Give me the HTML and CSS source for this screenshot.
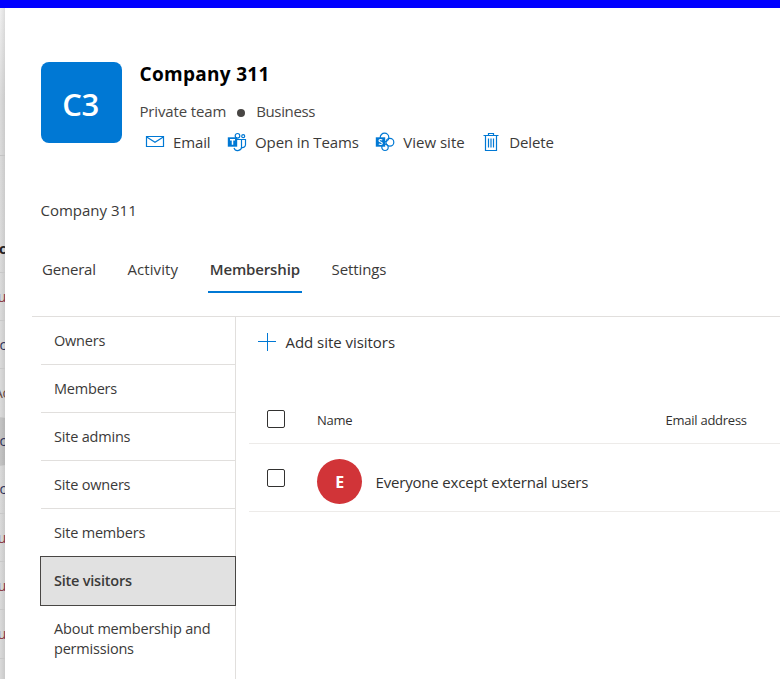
FILE: index.html
```html
<!DOCTYPE html>
<html lang="en">
<head>
<meta charset="utf-8">
<title>Company 311</title>
<link rel="stylesheet" href="styles.css">
</head>
<body>
<div class="topbar"></div>
<div class="shell">
  <div class="backdrop">
    <div class="behind-head"></div>
    <div class="behind-row tall"><b>nc</b></div>
    <div class="behind-row red"><span>u</span></div>
    <div class="behind-row"><span>c</span></div>
    <div class="behind-row mixed"><span>Ac</span></div>
    <div class="behind-row active"><span>c</span></div>
    <div class="behind-row"><span>c</span></div>
    <div class="behind-row red"><span>u</span></div>
    <div class="behind-row red"><span>u</span></div>
    <div class="behind-row red"><span>u</span></div>
  </div>
  <main class="panel">
    <header class="header">
      <div class="logo">C3</div>
      <div class="info">
        <h1><span class="t">Company 311</span></h1>
        <div class="meta"><span class="t private">Private team</span><i class="dot"></i><span class="t business">Business</span></div>
        <div class="actions">
          <button class="action email">
            <svg width="20" height="20" viewBox="0 0 20 20"><path d="M1.5 4.5h17v10h-17zM1.700 5l8.300 5.200L18.300 5"/></svg>
            <span class="t">Email</span></button>
          <button class="action teams">
            <svg width="20" height="20" viewBox="0 0 20 20"><circle cx="10.500" cy="3.800" r="2.300"/><circle cx="16.200" cy="4.200" r="1.500"/><path d="M10 7.500h4.500v6.500a3.900 3.900 0 0 1-7.500 2M14.500 7.500h4v5a3 3 0 0 1-4 3"/><path class="fill" d="M.8 5.300h9.400v9.400H.8z"/><path class="letter" d="M3 7.800h5M5.500 7.800v5"/></svg>
            <span class="t">Open in Teams</span></button>
          <button class="action site">
            <svg width="20" height="20" viewBox="0 0 20 20"><circle cx="9.500" cy="5.500" r="4.300"/><circle cx="14.900" cy="10.300" r="3.900"/><circle cx="10" cy="15.300" r="3.200"/><path class="fill" d="M.8 5.300h9.400v9.400H.8z"/><path class="letter thin" d="M7.300 8.200C6.200 7.200 4 7.400 4 8.700c0 1.500 3.300 1 3.300 2.600 0 1.500-2.400 1.500-3.500.6"/></svg>
            <span class="t">View site</span></button>
          <button class="action delete">
            <svg width="20" height="20" viewBox="0 0 20 20"><path d="M2.500 3.500h15M7.500 3.500v-2h5v2M4.500 3.500v15h11v-15M7.500 6.500v9M10 6.500v9M12.500 6.500v9"/></svg>
            <span class="t">Delete</span></button>
        </div>
      </div>
    </header>
    <p class="description"><span class="t">Company 311</span></p>
    <nav class="tabs">
      <a class="tab general"><span class="t">General</span></a>
      <a class="tab activity"><span class="t">Activity</span></a>
      <a class="tab selected"><span class="t">Membership</span></a>
      <a class="tab"><span class="t">Settings</span></a>
    </nav>
    <section class="content">
      <ul class="side">
        <li><span class="t">Owners</span></li>
        <li><span class="t">Members</span></li>
        <li><span class="t">Site admins</span></li>
        <li><span class="t">Site owners</span></li>
        <li class="sitemembers"><span class="t">Site members</span></li>
        <li class="current"><span class="t">Site visitors</span></li>
        <li class="about"><span class="t">About membership and</span><br><span class="t">permissions</span></li>
      </ul>
      <div class="main">
        <button class="add"><svg width="18" height="18" viewBox="0 0 18 18"><path d="M9.500 0v18M0 8.500h18"/></svg><span class="t">Add site visitors</span></button>
        <div class="row head"><i class="check"></i><span class="name"><span class="t">Name</span></span><span class="mail"><span class="t">Email address</span></span></div>
        <div class="row user"><i class="check"></i><span class="avatar">E</span><span class="t">Everyone except external users</span></div>
      </div>
    </section>
  </main>
</div>
</body>
</html>
```
FILE: styles.css
```css
* { box-sizing: border-box; }
body { margin: 0; width: 780px; height: 679px; overflow: hidden; background: #fff; color: #3b3a39; font: 15px/20px "Open Sans", "Noto Sans", sans-serif; letter-spacing: -0.3px; }
button { display: flex; align-items: center; padding: 0; border: 0; background: none; color: inherit; font: inherit; letter-spacing: inherit; }
.t { white-space: nowrap; }
.topbar { height: 8px; background: #00f; }
.shell { display: flex; height: 671px; }
.backdrop { width: 5px; flex: none; overflow: hidden; background: linear-gradient(90deg, rgba(0,0,0,0), rgba(0,0,0,.08)), linear-gradient(#f0f0f0, #dcdcdc 90px, #dadada); color: #2c3158; font-size: 14px; }
.behind-head { height: 148px; border-bottom: 1px solid #c4c4c4; }
.behind-row { display: flex; justify-content: flex-end; align-items: center; height: 48.2px; border-bottom: 1px solid #c8c8c8; }
.behind-row > * { margin-right: -1px; }
.behind-row.tall { height: 117px; padding-top: 70px; color: #222; }
.behind-row.red { color: #863743; }
.behind-row.mixed { color: #674b42; }
.behind-row.mixed > * { margin-right: -4px; }
.behind-row.active { background: rgba(0,0,0,.1); }
.panel { flex: 1; min-width: 0; background: #fff; }
.header { display: flex; gap: 17.5px; height: 187px; padding: 54px 0 0 36px; }
.logo { display: flex; align-items: center; justify-content: center; width: 81px; height: 81px; border-radius: 8px; background: #0078d4; color: #fff; font-size: 31px; font-weight: 600; letter-spacing: -0.5px; padding: 2px 2px 0 0; }
h1 { margin: 0; height: 26px; color: #000; font-size: 19px; line-height: 25px; font-weight: 700; letter-spacing: .3px; }
.meta { display: flex; align-items: center; height: 20px; margin-top: 13px; color: #484644; letter-spacing: -.15px; }
.business { letter-spacing: -.35px; }
.dot { width: 8px; height: 8px; margin: 3px 11px 0 11px; border-radius: 50%; background: #484644; }
.actions { display: flex; margin: 11px 0 0 5.5px; letter-spacing: -.12px; }
.action svg { margin-right: 8px; fill: none; stroke: #0078d4; stroke-width: 1.2; }
.action .fill { fill: #0078d4; stroke: none; }
.action .letter { stroke: #fff; stroke-width: 1.5; }
.action .thin { stroke-width: 1.1; }
.action { margin-right: 16.5px; }
.site { letter-spacing: 0; }
.description { margin: 0; padding: 5px 0 0 35.5px; height: 55px; letter-spacing: 0; }
.tabs { display: flex; gap: 27.7px; height: 66px; padding-left: 35px; letter-spacing: -.1px; }
.tab { height: 43px; padding: 9px 2px 0; }
.general { letter-spacing: -.2px; }
.activity { letter-spacing: .08px; }
.selected { border-bottom: 2px solid #0078d4; font-weight: 600; letter-spacing: -.15px; }
.content { display: flex; height: 363px; margin-left: 27px; border-top: 1px solid #e1dfdd; }
.side { width: 204px; flex: none; margin: 0; padding: 0 0 0 9px; border-right: 1px solid #e1dfdd; list-style: none; font-size: 14.5px; letter-spacing: -.2px; }
.side li { height: 48px; padding: 14px 13px 0; border-bottom: 1px solid #e1dfdd; }
.side .sitemembers, .side .about { border-bottom: 0; }
.side li.current { height: 50px; margin: -1px -1px 0; padding: 14px 13px 0; background: #e1e1e1; border: 1px solid #484644; font-weight: 600; letter-spacing: -.22px; }
.side .about { height: 70px; padding-top: 13px; }
.main { flex: 1; min-width: 0; padding-left: 13px; color: #323130; }
.add { height: 20px; margin: 15px 0 0 9px; letter-spacing: -.04px; }
.add svg { margin-right: 9.5px; stroke: #0078d4; stroke-width: 1; }
.row { display: flex; align-items: center; border-bottom: 1px solid #edebe9; }
.check { width: 18px; height: 18px; flex: none; margin: 0 32px 0 18px; border: 1px solid #323130; border-radius: 2px; }
.head { height: 49px; margin-top: 43px; font-size: 13px; letter-spacing: -.25px; }
.name, .mail { padding-top: 2px; }
.name { width: 348.5px; }
.user { height: 68px; }
.user .check { margin-top: 1px; }
.avatar { display: flex; align-items: center; justify-content: center; width: 45px; height: 45px; margin: 8px 13.5px 0 0; border-radius: 50%; background: #d13438; color: #fff; font-size: 16px; font-weight: 700; }
.user > .t { margin-top: 9px; letter-spacing: -.18px; }
```
